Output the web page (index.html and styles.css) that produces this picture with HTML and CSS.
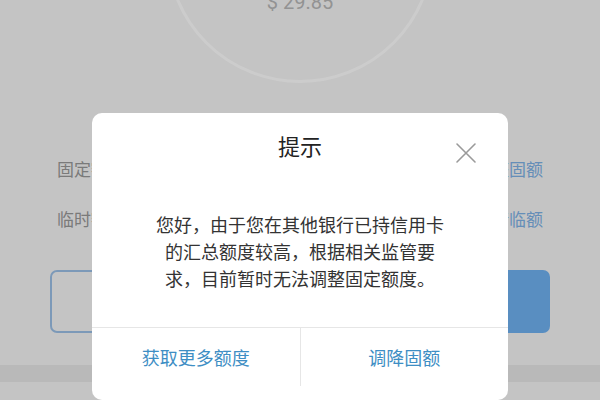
FILE: index.html
```html
<!DOCTYPE html>
<html lang="zh-CN">
<head>
<meta charset="utf-8">
<title>提示</title>
<link rel="stylesheet" href="styles.css">
</head>
<body>
<div class="page">
  <div class="hero">
    <div class="ring"><span class="amount">$ 29.85</span></div>
  </div>
  <div class="row"><span class="label">固定额度</span><span class="link">调整固额</span></div>
  <div class="row"><span class="label">临时额度</span><span class="link">申请临额</span></div>
  <div class="actions">
    <div class="btn btn-outline">查看账单</div>
    <div class="btn btn-fill">立即还款</div>
  </div>
  <div class="band"></div>
</div>
<div class="mask"></div>
<div class="dialog">
  <div class="dialog-title">提示</div>
  <svg class="close" viewBox="0 0 22 22" width="22" height="22"><path d="M2 2 L20 20 M20 2 L2 20" stroke="#9a9a9a" stroke-width="1.6" fill="none" stroke-linecap="round"/></svg>
  <div class="dialog-body">您好，由于您在其他银行已持信用卡的汇总额度较高，根据相关监管要求，目前暂时无法调整固定额度。</div>
  <div class="dialog-foot">
    <div class="foot-btn">获取更多额度</div>
    <div class="foot-btn">调降固额</div>
  </div>
</div>
</body>
</html>
```
FILE: styles.css
```css
html, body {
  margin: 0;
  padding: 0;
  width: 600px;
  height: 400px;
  overflow: hidden;
  font-family: "Noto Sans CJK SC", "Noto Sans", sans-serif;
}
.page {
  width: 600px;
  height: 400px;
  background: #f6f6f6;
  display: flex;
  flex-direction: column;
  overflow: hidden;
}
.hero {
  display: flex;
  justify-content: center;
  height: 83px;
  flex-shrink: 0;
}
.ring {
  width: 268px;
  height: 268px;
  margin-top: -185px;
  flex-shrink: 0;
  box-sizing: border-box;
  border: 3px solid #ffffff;
  border-radius: 50%;
  display: flex;
  align-items: flex-end;
  justify-content: center;
  padding-bottom: 66px;
}
.amount {
  font-family: "Roboto", "Liberation Sans", sans-serif;
  font-size: 20px;
  line-height: 24px;
  color: #b8b8b8;
}
.row {
  height: 50px;
  display: flex;
  justify-content: space-between;
  align-items: center;
  padding: 0 57px;
  font-size: 17px;
  flex-shrink: 0;
}
.row:first-of-type { margin-top: 60px; }
.hero + .row { margin-top: 60px; }
.label { color: #999999; }
.link { color: #7fb2e6; }
.actions {
  display: flex;
  gap: 20px;
  padding: 0 50px;
  margin-top: 27px;
  flex-shrink: 0;
}
.btn {
  flex: 1;
  height: 63px;
  box-sizing: border-box;
  border-radius: 7px;
  display: flex;
  align-items: center;
  justify-content: center;
  font-size: 18px;
}
.btn-outline {
  border: 2px solid #9cc0e6;
  color: #7fb2e6;
}
.btn-fill {
  background: #70b2f2;
  color: #ffffff;
}
.band {
  margin-top: 32px;
  height: 17px;
  background: #e8e8e8;
  flex-shrink: 0;
}
.mask {
  position: fixed;
  inset: 0;
  background: rgba(0, 0, 0, 0.2);
}
.dialog {
  position: fixed;
  left: 92px;
  top: 113px;
  width: 416px;
  height: 287px;
  background: #ffffff;
  border-radius: 10px;
  display: flex;
  flex-direction: column;
}
.dialog-title {
  padding-top: 18px;
  height: 28px;
  line-height: 28px;
  text-align: center;
  font-size: 22px;
  color: #222222;
}
.close {
  position: absolute;
  right: 31px;
  top: 29px;
}
.dialog-body {
  width: 300px;
  margin: 0 auto;
  padding: 52px 0 35px;
  font-size: 18px;
  line-height: 27px;
  color: #333333;
  text-align: center;
}
.dialog-foot {
  display: flex;
  border-top: 1px solid #e6e6e6;
  flex: 1;
}
.foot-btn {
  flex: 1;
  height: 58px;
  display: flex;
  align-items: center;
  justify-content: center;
  font-size: 18px;
  color: #3e8ec4;
}
.foot-btn + .foot-btn {
  border-left: 1px solid #e6e6e6;
}
```
